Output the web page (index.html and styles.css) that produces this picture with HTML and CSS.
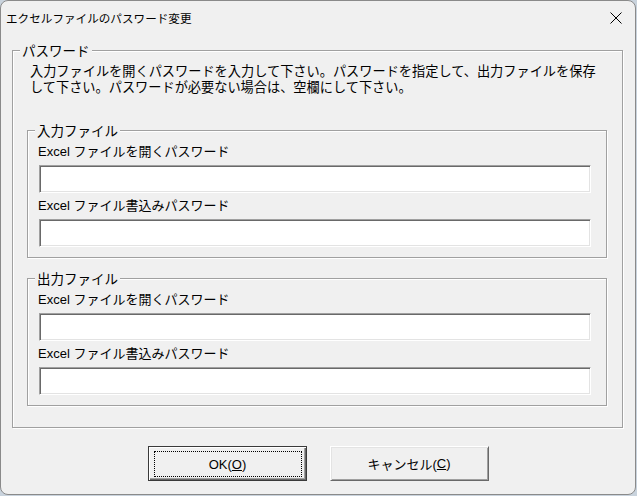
FILE: index.html
```html
<!DOCTYPE html>
<html lang="ja">
<head>
<meta charset="utf-8">
<title>エクセルファイルのパスワード変更</title>
<link rel="stylesheet" href="styles.css">
</head>
<body>
<div class="window">
  <div class="titlebar">
    <span class="title">エクセルファイルのパスワード変更</span>
    <span class="close">
      <svg width="12" height="12" viewBox="0 0 12 12"><path d="M0.5 0.5 L11.5 11.5 M11.5 0.5 L0.5 11.5" stroke="#000" stroke-width="1" fill="none"/></svg>
    </span>
  </div>
  <div class="client">
    <fieldset class="group outer">
      <legend>パスワード</legend>
      <p class="desc">入力ファイルを開くパスワードを入力して下さい。パスワードを指定して、出力ファイルを保存<br>して下さい。パスワードが必要ない場合は、空欄にして下さい。</p>
      <fieldset class="group inner first">
        <legend>入力ファイル</legend>
        <div class="fields">
          <label class="lbl">Excel ファイルを開くパスワード</label>
          <input class="edit" type="password">
          <label class="lbl">Excel ファイル書込みパスワード</label>
          <input class="edit" type="password">
        </div>
      </fieldset>
      <fieldset class="group inner second">
        <legend>出力ファイル</legend>
        <div class="fields">
          <label class="lbl">Excel ファイルを開くパスワード</label>
          <input class="edit" type="password">
          <label class="lbl">Excel ファイル書込みパスワード</label>
          <input class="edit" type="password">
        </div>
      </fieldset>
    </fieldset>
    <div class="buttons">
      <button class="btn default"><span class="focus">OK(<u>O</u>)</span></button>
      <button class="btn"><span class="nofocus">キャンセル(<u>C</u>)</span></button>
    </div>
  </div>
</div>
</body>
</html>
```
FILE: styles.css
```css
html, body {
  margin: 0;
  padding: 0;
  width: 637px;
  height: 496px;
  overflow: hidden;
  background: #c9d3dd;
}
.window {
  box-sizing: border-box;
  width: 636px;
  height: 495px;
  background: #f0f0f0;
  border: 1px solid #8a8a8a;
  border-radius: 8px;
  display: flex;
  flex-direction: column;
  color: #000;
  font-family: "Liberation Sans", "Noto Sans CJK JP", sans-serif;
}
.titlebar {
  height: 33px;
  display: flex;
  align-items: center;
  justify-content: space-between;
  padding-left: 5px;
  padding-right: 13px;
}
.title {
  font-family: "Noto Sans CJK JP", sans-serif;
  font-size: 11.6px;
  line-height: 16px;
}
.close {
  display: flex;
  width: 12px;
  height: 12px;
}
.client {
  display: flex;
  flex-direction: column;
  padding: 8px 0 0 11px;
}
.group {
  margin: 0;
  padding: 0;
  min-width: 0;
  box-sizing: border-box;
  border: 1px solid #a0a0a0;
  box-shadow: inset 1px 1px 0 #fff, 1px 1px 0 #fff;
}
.group legend {
  margin-left: 7px;
  padding: 0 2px;
  font-family: "Noto Sans CJK JP", sans-serif;
  font-size: 13.5px;
  line-height: 16px;
  height: 16px;
  background: #f0f0f0;
}
.outer {
  width: 611px;
  padding-bottom: 21px;
}
.desc {
  margin: 5px 0 0 17px;
  font-family: "Noto Sans CJK JP", sans-serif;
  font-size: 13.2px;
  line-height: 16px;
  white-space: nowrap;
}
.inner {
  width: 580px;
  margin-left: 14px;
}
.first {
  margin-top: 27px;
}
.second {
  margin-top: 12px;
}
.fields {
  display: flex;
  flex-direction: column;
  align-items: flex-start;
  padding: 5px 0 10px 10px;
}
.lbl {
  font-size: 13px;
  line-height: 18px;
  height: 18px;
  white-space: nowrap;
}
.edit {
  appearance: none;
  box-sizing: border-box;
  margin: 4px 0 4px 1px;
  padding: 0;
  width: 552px;
  height: 28px;
  background: #fff;
  border: 1px solid;
  border-color: #a0a0a0 #fff #fff #a0a0a0;
  box-shadow: inset 1px 1px 0 #696969, inset -1px -1px 0 #e3e3e3;
  outline: none;
}
.fields .edit:last-child {
  margin-bottom: 0;
}
.buttons {
  display: flex;
  justify-content: center;
  gap: 23px;
  margin-top: 18px;
  margin-left: -11px;
}
.btn {
  box-sizing: border-box;
  width: 159px;
  height: 35px;
  padding: 0;
  margin: 0;
  background: #f0f0f0;
  border: 1px solid;
  border-color: #fff #696969 #696969 #fff;
  box-shadow: inset 1px 1px 0 #e3e3e3, inset -1px -1px 0 #a0a0a0;
  font-family: "Liberation Sans", "Noto Sans CJK JP", sans-serif;
  font-size: 13px;
  color: #000;
  display: flex;
  align-items: stretch;
}
.btn.default {
  border: 1px solid #3a3a3a;
  box-shadow: inset 1px 1px 0 #fff, inset -1px -1px 0 #696969, inset -2px -2px 0 #a0a0a0;
  padding: 4px 4px 3px 5px;
}
.btn .focus {
  flex: 1;
  display: flex;
  align-items: center;
  justify-content: center;
  border: 1px dotted #000;
}
.btn .nofocus {
  flex: 1;
  display: flex;
  align-items: center;
  justify-content: center;
}
.btn u {
  text-decoration: underline;
  text-underline-offset: 1px;
}
```
